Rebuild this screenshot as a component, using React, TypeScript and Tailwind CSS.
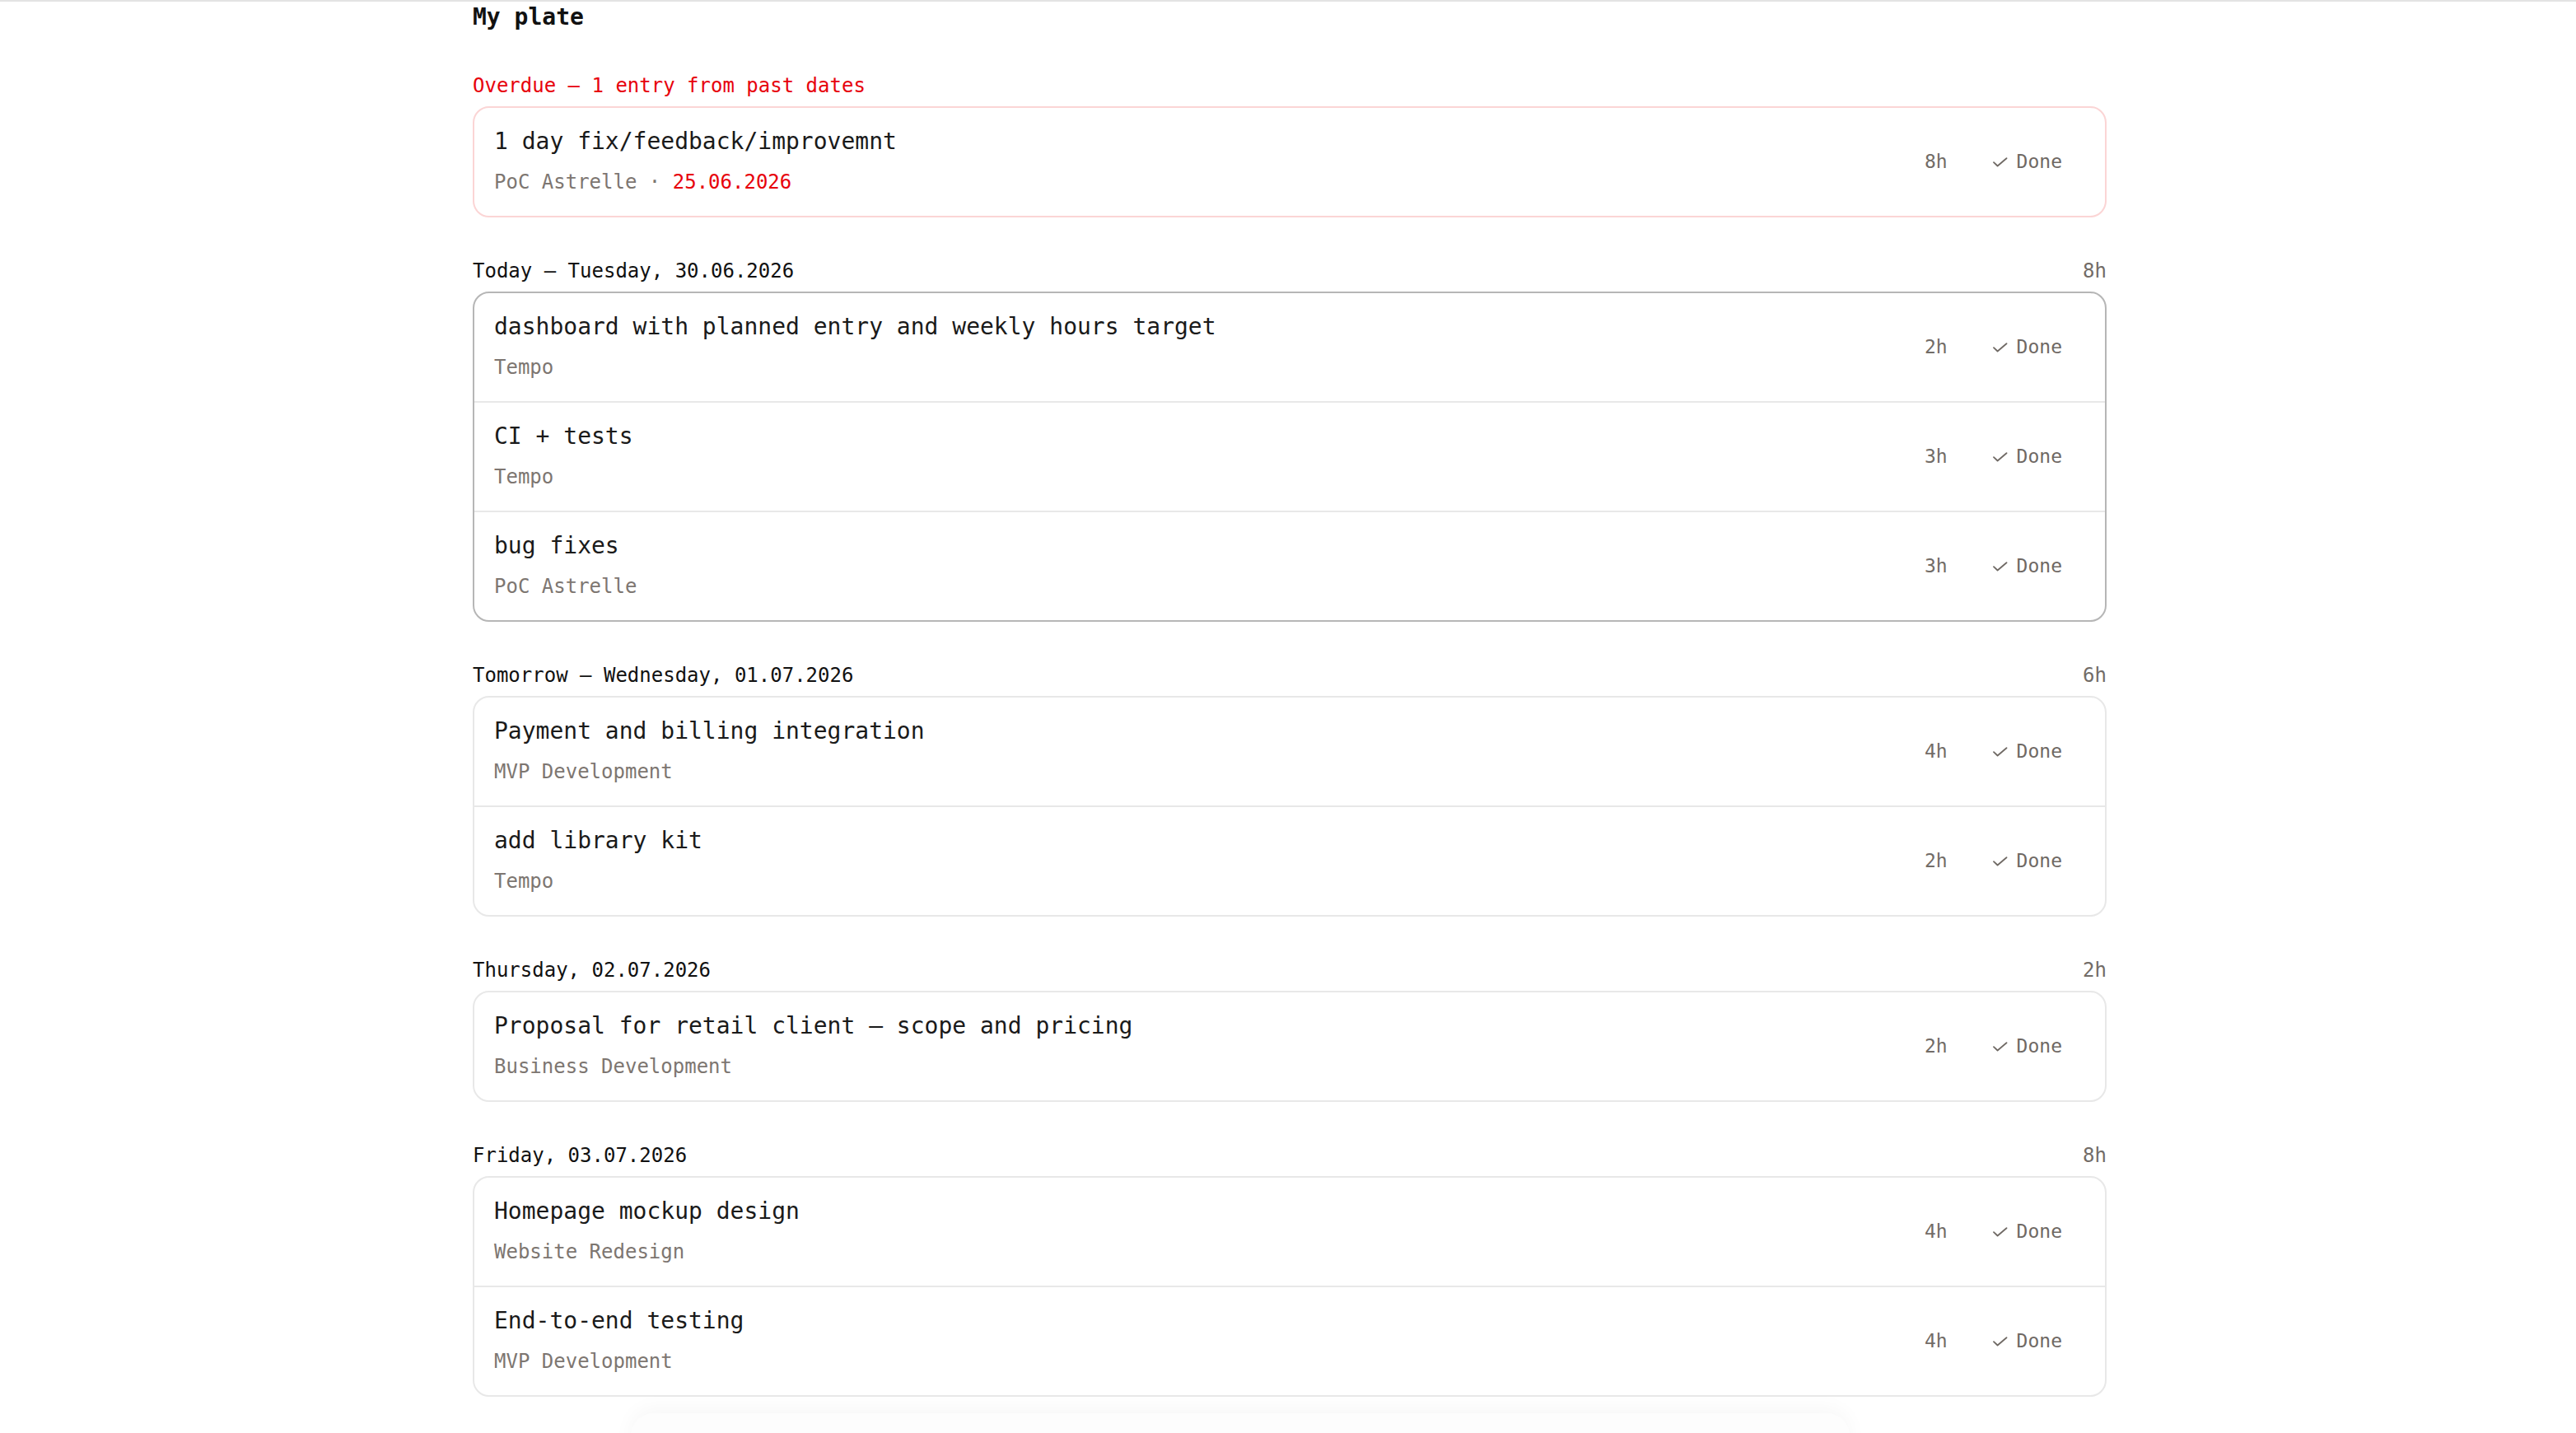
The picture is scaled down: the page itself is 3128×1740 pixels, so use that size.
import React from "react";

type Entry = { title: string; project: string; hours: string; date?: string };
type Group = { label: string; total?: string; entries: Entry[]; tone?: "overdue" | "focus" };

const groups: Group[] = [
  {
    label: "Overdue — 1 entry from past dates",
    tone: "overdue",
    entries: [{ title: "1 day fix/feedback/improvemnt", project: "PoC Astrelle", date: "25.06.2026", hours: "8h" }],
  },
  {
    label: "Today — Tuesday, 30.06.2026",
    total: "8h",
    tone: "focus",
    entries: [
      { title: "dashboard with planned entry and weekly hours target", project: "Tempo", hours: "2h" },
      { title: "CI + tests", project: "Tempo", hours: "3h" },
      { title: "bug fixes", project: "PoC Astrelle", hours: "3h" },
    ],
  },
  {
    label: "Tomorrow — Wednesday, 01.07.2026",
    total: "6h",
    entries: [
      { title: "Payment and billing integration", project: "MVP Development", hours: "4h" },
      { title: "add library kit", project: "Tempo", hours: "2h" },
    ],
  },
  {
    label: "Thursday, 02.07.2026",
    total: "2h",
    entries: [{ title: "Proposal for retail client — scope and pricing", project: "Business Development", hours: "2h" }],
  },
  {
    label: "Friday, 03.07.2026",
    total: "8h",
    entries: [
      { title: "Homepage mockup design", project: "Website Redesign", hours: "4h" },
      { title: "End-to-end testing", project: "MVP Development", hours: "4h" },
    ],
  },
];

function Tick() {
  return (
    <svg width="20" height="12" viewBox="0 0 20 12" fill="none">
      <path d="M2 6.2 6.6 10.5 17.5 1.2" stroke="#6f6964" strokeWidth="1.8" strokeLinecap="round" strokeLinejoin="round" />
    </svg>
  );
}

function Row({ entry, last }: { entry: Entry; last: boolean }) {
  return (
    <div className={`flex items-center pl-6 pr-[52px] py-[25px] ${last ? "" : "border-b-2 border-[#e8e8e8]"}`}>
      <div className="flex-1 min-w-0">
        <div className="text-[28px] leading-[31px] text-[#1a1a1a]">{entry.title}</div>
        <div className="mt-[18px] text-[24px] leading-[32px] text-[#7d7671] whitespace-pre">
          {entry.project}
          {entry.date && (
            <>
              {" · "}
              <span className="text-red-600">{entry.date}</span>
            </>
          )}
        </div>
      </div>
      <span className="text-[23px] text-[#726c67]">{entry.hours}</span>
      <button className="ml-[54px] flex items-center gap-[10px] text-[23px] font-medium text-[#6f6964]">
        <Tick />
        Done
      </button>
    </div>
  );
}

export default function App() {
  return (
    <div
      className="min-h-screen bg-white border-t-2 border-[#e3e3e3]"
      style={{ fontFamily: '"DejaVu Sans Mono", "Liberation Mono", monospace' }}
    >
      <div className="flex justify-center pl-[4px]">
        <div className="w-[1984px] pb-[60px]">
          <h1 className="text-[28px] leading-[38px] font-semibold text-[#111]">My plate</h1>

          <div className="mt-[48px] flex flex-col gap-[49px]">
            {groups.map((g) => (
              <section key={g.label}>
                <div className="flex items-center justify-between text-[24px] leading-[32px]">
                  <span className={g.tone === "overdue" ? "text-red-600" : "text-[#111] font-medium"}>{g.label}</span>
                  {g.total && <span className="text-[#726c67]">{g.total}</span>}
                </div>
                <div
                  className={`mt-[9px] rounded-[20px] border-2 bg-white ${
                    g.tone === "overdue"
                      ? "border-[#fbd5d5]"
                      : g.tone === "focus"
                      ? "border-[#b6b6b6]"
                      : "border-[#e8e8e8]"
                  }`}
                >
                  {g.entries.map((e, i) => (
                    <Row key={e.title} entry={e} last={i === g.entries.length - 1} />
                  ))}
                </div>
              </section>
            ))}
          </div>
        </div>
      </div>

      <div className="fixed left-[766px] top-[1716px] w-[1480px] h-[100px] rounded-[28px] bg-[#fdfdfd] shadow-[0_-6px_24px_rgba(0,0,0,0.035)]" />
    </div>
  );
}
